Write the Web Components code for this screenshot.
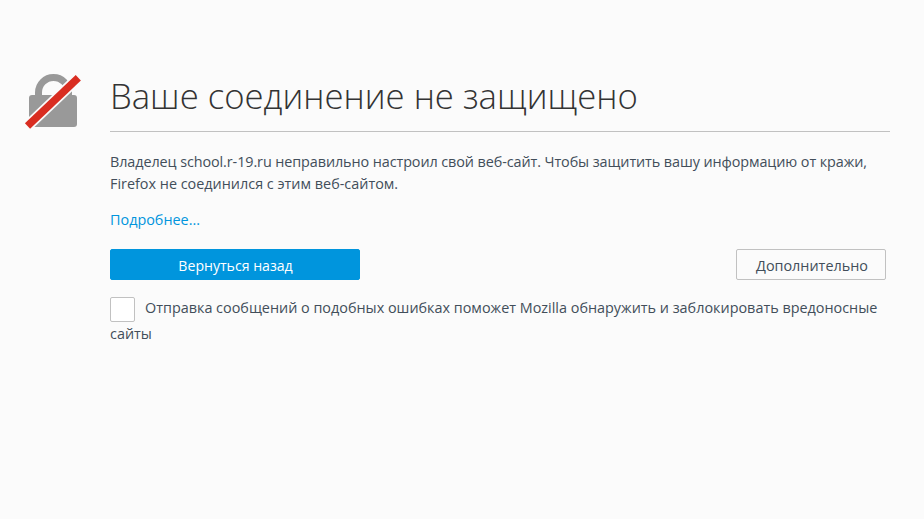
<!DOCTYPE html>
<html lang="ru">
<head>
<meta charset="utf-8">
<title>Ваше соединение не защищено</title>
<style>
  html, body { margin: 0; height: 100%; background: #fbfbfb; }
  body { font-family: "Open Sans", sans-serif; color: #424e5a; }
</style>
</head>
<body>
<cert-error-page>
  <error-title slot="title">Ваше соединение не защищено</error-title>
  <span slot="text"><span style="letter-spacing:-0.09px">Владелец school.r-19.ru неправильно настроил свой веб-сайт. Чтобы защитить вашу информацию от кражи,</span> Firefox не соединился с этим веб-сайтом.</span>
  <a slot="link" href="#">Подробнее...</a>
  <action-button slot="primary" kind="primary" wide>Вернуться назад</action-button>
  <action-button slot="secondary">Дополнительно</action-button>
  <report-check slot="report">Отправка сообщений о подобных ошибках поможет Mozilla обнаружить и заблокировать вредоносные сайты</report-check>
</cert-error-page>

<script>
class CertErrorPage extends HTMLElement {
    connectedCallback() {
        this.attachShadow({ mode: 'open' });
        this.shadowRoot.innerHTML = `
            <style>
                :host { display: block; padding: 67px 34px 0 110px; }
                .container { width: 780px; }
                .text { font-size: 14.4px; line-height: 22px; padding-top: 19px; }
                .link { margin-top: 14px; font-size: 14.4px; line-height: 22px; }
                ::slotted(a) { color: #0095dd; text-decoration: none; }
                .buttons { display: flex; justify-content: space-between; margin-top: 18px; padding-right: 4px; }
                .report { margin-top: 15px; }
            </style>
            <div class="container">
                <slot name="title"></slot>
                <div class="text"><slot name="text"></slot></div>
                <div class="link"><slot name="link"></slot></div>
                <div class="buttons">
                    <slot name="primary"></slot>
                    <slot name="secondary"></slot>
                </div>
                <div class="report"><slot name="report"></slot></div>
            </div>
        `;
    }
}

class ErrorTitle extends HTMLElement {
    connectedCallback() {
        this.attachShadow({ mode: 'open' });
        this.shadowRoot.innerHTML = `
            <style>
                :host { display: block; position: relative; border-bottom: 1px solid #c1c1c1; padding-bottom: 7px; }
                h1 { margin: 0; font-size: 34.7px; line-height: 57px; font-weight: 300; color: #333; }
                svg { position: absolute; left: -87px; top: 6px; }
            </style>
            <svg width="60" height="58" viewBox="0 0 60 58">
                <path d="M15.500 24V19.500a15 15 0 0 1 30 0V24" fill="none" stroke="#999" stroke-width="7"/>
                <rect x="6" y="22" width="48" height="32" rx="3" fill="#999"/>
                <path d="M4.500 53 55.300 4.700" stroke="#fbfbfb" stroke-width="11"/>
                <path d="M4.500 53 55.300 4.700" stroke="#d92d21" stroke-width="7.500"/>
            </svg>
            <h1><slot></slot></h1>
        `;
    }
}

class ActionButton extends HTMLElement {
    connectedCallback() {
        const primary = this.getAttribute('kind') === 'primary';
        this.attachShadow({ mode: 'open' });
        this.shadowRoot.innerHTML = `
            <style>
                :host { display: block; }
                button {
                    box-sizing: border-box;
                    height: 31px;
                    width: ${this.hasAttribute('wide') ? '250px' : '150px'};
                    padding: 2px 0 0 ${primary ? '1px' : '2px'};
                    font: ${primary ? '14.1px' : '14.4px'} "Open Sans", sans-serif;
                    border-radius: 2px;
                    border: 1px solid ${primary ? '#0095dd' : '#c1c1c1'};
                    background: ${primary ? '#0095dd' : '#fbfbfb'};
                    color: ${primary ? '#fff' : '#424e5a'};
                }
            </style>
            <button type="button"><slot></slot></button>
        `;
    }
}

class ReportCheck extends HTMLElement {
    connectedCallback() {
        this.attachShadow({ mode: 'open' });
        this.shadowRoot.innerHTML = `
            <style>
                :host { display: block; font-size: 14.4px; line-height: 26px; }
                .box {
                    display: inline-block;
                    box-sizing: border-box;
                    width: 25px;
                    height: 25px;
                    margin: -4px 10px -4px 0;
                    vertical-align: middle;
                    background: #fff;
                    border: 1px solid #c1c1c1;
                    border-radius: 2px;
                }
            </style>
            <span class="box"></span><slot></slot>
        `;
    }
}

customElements.define('cert-error-page', CertErrorPage);
customElements.define('error-title', ErrorTitle);
customElements.define('action-button', ActionButton);
customElements.define('report-check', ReportCheck);
</script>
</body>
</html>
